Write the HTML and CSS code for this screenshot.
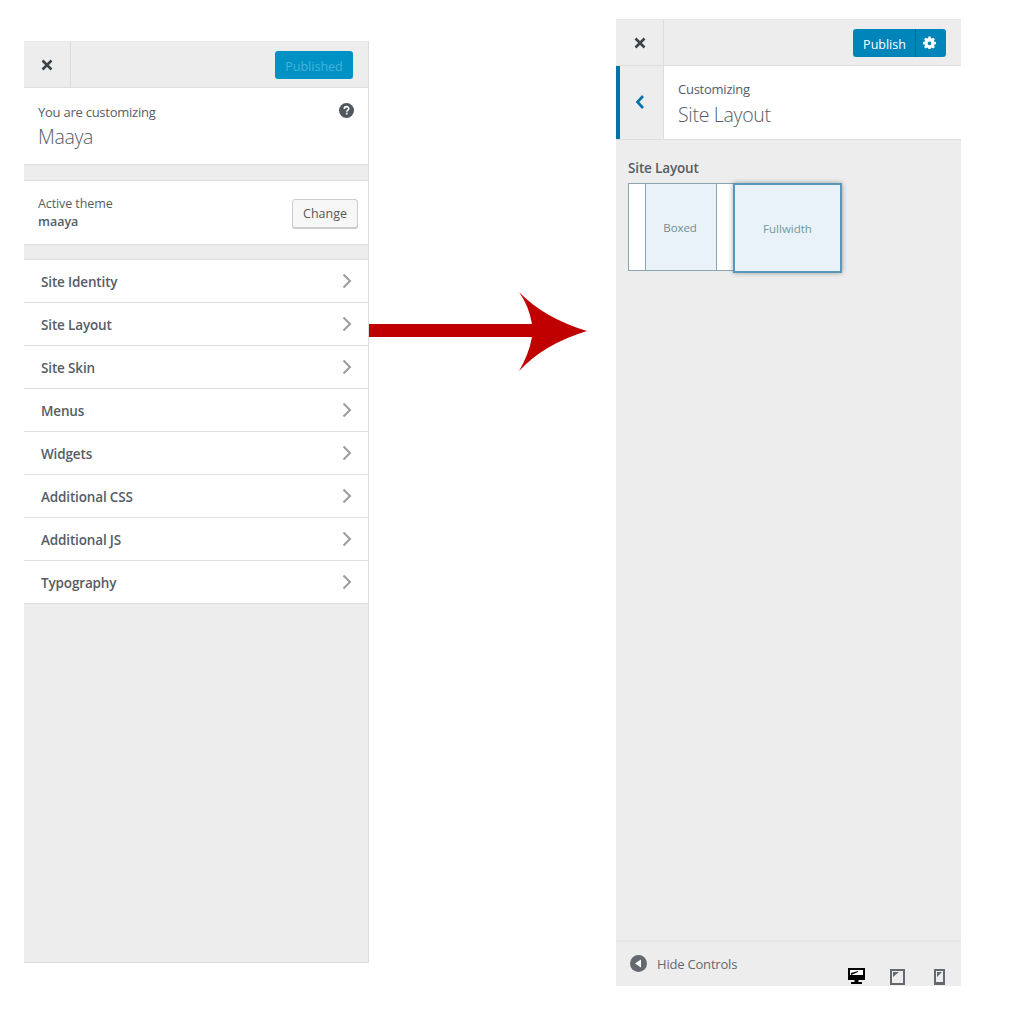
FILE: index.html
```html
<!DOCTYPE html>
<html lang="en">
<head>
<meta charset="utf-8">
<title>Customizer</title>
<link rel="stylesheet" href="styles.css">
</head>
<body>
<div class="canvas">
  <aside class="panel panel-left">
    <header class="topbar">
      <div class="close"><svg width="12" height="12" viewBox="0 0 12 12"><path d="M1.5 1.5l9 9M10.500 1.500l-9 9" stroke="#3c434a" stroke-width="2.600"/></svg></div>
      <button class="btn-published">Published</button>
    </header>
    <section class="info">
      <div class="info-text">
        <div class="small">You are customizing</div>
        <div class="title">Maaya</div>
      </div>
      <svg class="help" width="15" height="15" viewBox="0 0 15 15"><circle cx="7.500" cy="7.500" r="7.500" fill="#50575e"/><path d="M5.300 5.900c0-3 4.500-3 4.500-.3 0 1.600-2 1.500-2 3.100" fill="none" stroke="#fff" stroke-width="1.600"/><rect x="6.900" y="9.700" width="1.700" height="1.700" fill="#fff"/></svg>
    </section>
    <section class="theme">
      <div class="theme-text">
        <div class="small theme-label">Active theme</div>
        <div class="theme-name">maaya</div>
      </div>
      <button class="btn-change">Change</button>
    </section>
    <ul class="menu">
      <li class="menu-item"><span>Site Identity</span><svg class="chev" width="10" height="16" viewBox="0 0 10 16"><path d="M1.500 1.500L8 8l-6.500 6.500" fill="none" stroke="#999ca1" stroke-width="2"/></svg></li>
      <li class="menu-item"><span>Site Layout</span><svg class="chev" width="10" height="16" viewBox="0 0 10 16"><path d="M1.500 1.500L8 8l-6.500 6.500" fill="none" stroke="#999ca1" stroke-width="2"/></svg></li>
      <li class="menu-item"><span>Site Skin</span><svg class="chev" width="10" height="16" viewBox="0 0 10 16"><path d="M1.500 1.500L8 8l-6.500 6.500" fill="none" stroke="#999ca1" stroke-width="2"/></svg></li>
      <li class="menu-item"><span>Menus</span><svg class="chev" width="10" height="16" viewBox="0 0 10 16"><path d="M1.500 1.500L8 8l-6.500 6.500" fill="none" stroke="#999ca1" stroke-width="2"/></svg></li>
      <li class="menu-item"><span>Widgets</span><svg class="chev" width="10" height="16" viewBox="0 0 10 16"><path d="M1.500 1.500L8 8l-6.500 6.500" fill="none" stroke="#999ca1" stroke-width="2"/></svg></li>
      <li class="menu-item"><span>Additional CSS</span><svg class="chev" width="10" height="16" viewBox="0 0 10 16"><path d="M1.500 1.500L8 8l-6.500 6.500" fill="none" stroke="#999ca1" stroke-width="2"/></svg></li>
      <li class="menu-item"><span>Additional JS</span><svg class="chev" width="10" height="16" viewBox="0 0 10 16"><path d="M1.500 1.500L8 8l-6.500 6.500" fill="none" stroke="#999ca1" stroke-width="2"/></svg></li>
      <li class="menu-item"><span>Typography</span><svg class="chev" width="10" height="16" viewBox="0 0 10 16"><path d="M1.500 1.500L8 8l-6.500 6.500" fill="none" stroke="#999ca1" stroke-width="2"/></svg></li>
    </ul>
  </aside>

  <svg class="arrow" width="220" height="82" viewBox="0 0 220 82"><path d="M0 34H163Q160 16 150 2Q175 28 218 41Q175 54 150 81Q160 64 163 47H0Z" fill="#c00000"/></svg>

  <aside class="panel panel-right">
    <header class="topbar">
      <div class="close close-wide"><svg width="12" height="12" viewBox="0 0 12 12"><path d="M1.500 1.500l9 9M10.500 1.500l-9 9" stroke="#3c434a" stroke-width="2.600"/></svg></div>
      <div class="publish">
        <button class="btn-publish">Publish</button>
        <button class="btn-gear"><svg width="13" height="13" viewBox="-2 -2 24 24"><path fill="#fff" d="M8 -1h4l.6 3 1.900.8L17 1.100 19.900 4l-1.600 2.800.8 1.900 3 .6v4l-3 .6-.8 1.900 1.600 2.500L17 21l-2.500-1.600-1.900.8L12 23H8l-.6-2.800-1.900-.8L3 21 .1 18.300l1.600-2.500-.8-1.900-3-.6v-4l3-.6.8-1.900L.1 4 3 1.100l2.500 1.700 1.900-.8zM10 8a3.500 3.500 0 1 0 0 7 3.500 3.500 0 0 0 0-7z"/></svg></button>
      </div>
    </header>
    <section class="section-head">
      <div class="back"><svg class="back-icon" width="10" height="16" viewBox="0 0 10 16"><path d="M8 2L2.500 8 8 14" fill="none" stroke="#0073aa" stroke-width="2.600"/></svg></div>
      <div class="section-title">
        <div class="small">Customizing</div>
        <div class="title title-section">Site Layout</div>
      </div>
    </section>
    <section class="control">
      <div class="control-label">Site Layout</div>
      <div class="layouts">
        <div class="opt-boxed"><div class="opt-boxed-inner">Boxed</div></div>
        <div class="opt-full">Fullwidth</div>
      </div>
    </section>
    <footer class="foot">
      <div class="hide">
        <svg width="17" height="17" viewBox="0 0 17 17"><circle cx="8.500" cy="8.500" r="8.500" fill="#646970"/><path d="M11 4.500v8L5 8.500z" fill="#fff"/></svg>
        <span>Hide Controls</span>
      </div>
      <div class="devices">
        <svg width="17" height="17" viewBox="0 0 17 17"><path fill="#000" d="M0 0h17v12H10.500v2H14v2H3v-2h3.500v-2H0z"/><path fill="#fff" d="M2 2h13v8H2z"/><path fill="#000" d="M3 5l7-2v1l-7 3zM2 7h13v3H2z"/></svg>
        <svg width="15" height="16" viewBox="0 0 15 16"><path fill="#646970" d="M0 0h15v16H0zM2 2v12h11V2z"/><path fill="#646970" d="M3 3h6L3 8z"/></svg>
        <svg class="device-phone" width="11" height="16" viewBox="0 0 11 16"><path fill="#646970" d="M0 0h11v16H0zM2 2v11h7V2z"/><path fill="#646970" d="M3 3h5L3 8z"/></svg>
      </div>
    </footer>
  </aside>
</div>
</body>
</html>
```
FILE: styles.css
```css
* { box-sizing: border-box; }
html, body { margin: 0; padding: 0; background: #fff; }
body { font-family: "Open Sans", "Noto Sans", sans-serif; color: #555d66; }
.canvas { position: relative; width: 1024px; height: 1024px; display: flex; align-items: flex-start; padding-left: 24px; gap: 247px; }
button { font-family: inherit; cursor: default; }
.panel { width: 345px; background: #ededed; display: flex; flex-direction: column; border-right: 1px solid #ddd; }
.panel-left { margin-top: 41px; height: 922px; border-bottom: 1px solid #ddd; }
.panel-right { margin-top: 19px; height: 967px; border-right: 0; }
.topbar { height: 47px; flex: none; display: flex; align-items: center; justify-content: space-between; border-bottom: 1px solid #ddd; padding-right: 15px; border-top: 1px solid #e8e8e8; }
.close { width: 47px; height: 100%; display: flex; align-items: center; justify-content: center; border-right: 1px solid #ddd; }
.close-wide { width: 48px; }
.btn-published { width: 78px; height: 28px; border: 0; border-radius: 3px; background: #0091c5; color: #44b4dc; font-size: 12.500px; padding: 4px 0 0; }
.info { height: 77px; background: #fff; border-bottom: 1px solid #ddd; display: flex; justify-content: space-between; padding: 15px 14px 0 14px; }
.small { font-size: 13px; line-height: 18px; color: #555d66; letter-spacing: -.25px; }
.title { font-size: 19.500px; line-height: 26px; font-weight: 300; color: #555d66; margin-top: 3px; letter-spacing: -.35px; }
.title-section { margin-top: 4px; letter-spacing: -.3px; }
.theme { height: 65px; margin-top: 15px; background: #fff; border-top: 1px solid #ddd; border-bottom: 1px solid #ddd; display: flex; justify-content: space-between; align-items: center; padding: 0 10px 0 14px; }
.theme-text { padding-top: 1px; }
.theme-label { line-height: 18px; font-size: 12.500px; letter-spacing: -.1px; }
.theme-name { font-size: 12.500px; font-weight: 600; line-height: 18px; color: #555d66; }
.btn-change { width: 66px; height: 29px; background: #f7f7f7; border: 1px solid #ccc; border-radius: 3px; box-shadow: 0 1px 0 #ccc; color: #555; font-size: 12.500px; padding: 0; margin-top: 1px; }
.menu { list-style: none; margin: 14px 0 0; padding: 0; border-top: 1px solid #ddd; }
.menu-item { height: 43px; background: #fff; border-bottom: 1px solid #ddd; display: flex; align-items: center; justify-content: space-between; padding: 1px 16px 0 17px; font-size: 13.500px; font-weight: 600; color: #555d66; letter-spacing: -.15px; }
.chev { margin-top: -1px; }
.arrow { position: absolute; left: 369px; top: 290px; }
.publish { display: flex; height: 28px; }
.btn-publish { width: 63px; border: 0; background: #0085ba; color: #fff; font-size: 12.500px; padding: 4px 0 0 1px; border-radius: 3px 0 0 3px; border-right: 1px solid #006799; }
.btn-gear { width: 30px; border: 0; background: #0085ba; border-radius: 0 3px 3px 0; padding: 0 3px 0 0; display: flex; align-items: center; justify-content: center; }
.section-head { height: 74px; flex: none; background: #fff; display: flex; border-bottom: 1px solid #ddd; }
.back { width: 48px; background: #ededed; border-left: 4px solid #0073aa; border-right: 1px solid #ddd; padding-right: 3px; display: flex; align-items: center; justify-content: center; }
.back-icon { margin-top: -2px; }
.section-title { padding: 14px 0 0 14px; }
.control { flex: 1; padding: 19px 12px 0; }
.control-label { font-size: 13.500px; font-weight: 600; line-height: 18px; color: #555d66; margin-bottom: 6px; letter-spacing: -.15px; }
.layouts { display: flex; }
.opt-boxed { width: 105px; height: 88px; background: #fff; border: 1px solid #8aa4b0; border-right: 0; padding: 0 16px; }
.opt-boxed-inner { height: 100%; background: #e8f2f8; border-left: 1px solid #8aa4b0; border-right: 1px solid #8aa4b0; display: flex; align-items: center; justify-content: center; padding-right: 2px; font-size: 11.500px; color: #6d8f9b; letter-spacing: -.1px; }
.opt-full { width: 109px; height: 90px; background: #e8f2f8; border: 2px solid #5a96b8; box-shadow: 0 0 5px rgba(0,0,0,.35); display: flex; align-items: center; justify-content: center; font-size: 11.500px; color: #6d9aa0; }
.foot { height: 46px; flex: none; border-top: 2px solid #e5e5e5; position: relative; }
.hide { display: flex; align-items: flex-start; gap: 10px; padding: 13px 0 0 14px; font-size: 13px; color: #646970; letter-spacing: -.2px; }
.devices { position: absolute; right: 16px; bottom: 1px; display: flex; align-items: flex-end; gap: 25px; }
.device-phone { margin-left: 4px; }
```
